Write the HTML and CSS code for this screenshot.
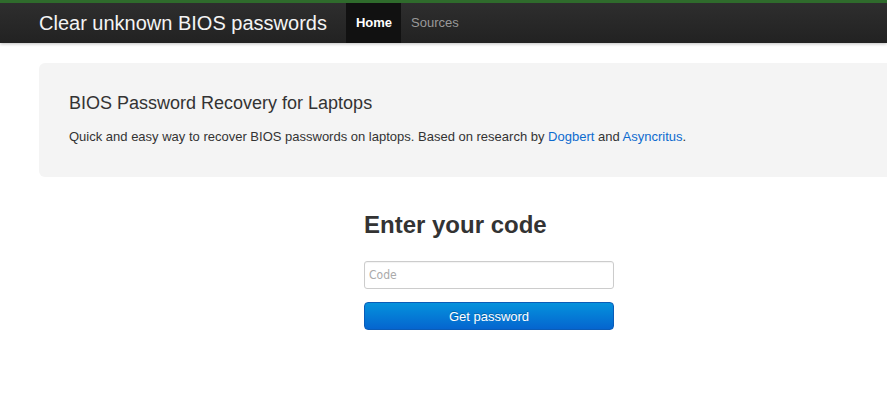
FILE: index.html
```html
<!DOCTYPE html>
<html>
	<head>
		<meta charset="UTF-8">
		<title>Clear unknown BIOS passwords</title>
		<link rel="stylesheet" href="styles.css">
	</head>
	<body>
		<div class="navbar">
			<div class="container nav_inner">
				<a class="brand" href="#">Clear unknown BIOS passwords</a>
				<ul class="nav">
					<li class="active"><a href="#">Home</a></li>
					<li><a href="#">Sources</a></li>
				</ul>
			</div>
		</div>
		<div class="container">
			<div class="hero">
				<h1>BIOS Password Recovery for Laptops</h1>
				<p>Quick and easy way to recover BIOS passwords on laptops. Based on research by <a href="#">Dogbert</a> and <a href="#">Asyncritus</a>.</p>
			</div>
			<div class="code_form">
				<h2>Enter your code</h2>
				<input type="text" placeholder="Code">
				<button>Get password</button>
			</div>
		</div>
	</body>
</html>
```
FILE: styles.css
```css
*{
	padding: 0px;
	margin: 0px;
	box-sizing: border-box;
}
html, body{
	overflow: hidden;
}
body{
	font-family: "Liberation Sans", Arial, sans-serif;
	font-size: 13px;
	line-height: 18px;
	color: #333;
	background: #fff;
}
a{
	text-decoration: none;
	color: #0d6bcf;
}
.navbar{
	border-top: 3px solid #2f6b2c;
	background: linear-gradient(#2e2e2e, #222);
	height: 43px;
	box-shadow: 0 1px 3px rgba(0,0,0,0.25);
}
.container{
	width: 940px;
	margin-left: 39px;
}
.nav_inner{
	display: flex;
	height: 40px;
}
.brand{
	color: #f4f4f4;
	font-size: 20px;
	line-height: 40px;
	margin-right: 19px;
}
.nav{
	list-style: none;
	display: flex;
}
.nav li a{
	display: block;
	padding: 0 10px;
	line-height: 40px;
	color: #999;
	font-size: 13px;
}
.nav li.active a{
	background: #111;
	color: #fff;
	font-weight: bold;
	padding: 0 9px 0 10px;
}
.hero{
	margin-top: 20px;
	background: #f4f4f4;
	border-radius: 6px;
	padding: 30px 30px 31px;
}
.hero h1{
	font-size: 18px;
	font-weight: normal;
	line-height: 20px;
	margin-bottom: 15px;
}
.code_form{
	width: 250px;
	margin: 33px 0 0 325px;
}
.code_form h2{
	font-size: 24px;
	line-height: 30px;
	font-weight: bold;
	margin-bottom: 21px;
}
.code_form input{
	display: block;
	width: 250px;
	height: 28px;
	border: 1px solid #ccc;
	border-radius: 3px;
	padding: 0 4px;
	font-family: "Liberation Sans Narrow", "DejaVu Sans Condensed", sans-serif;
	font-size: 12px;
	box-shadow: inset 0 1px 1px rgba(0,0,0,0.05);
}
.code_form input::placeholder{
	color: #aaa;
}
.code_form button{
	display: block;
	width: 250px;
	height: 28px;
	margin-top: 13px;
	border: 1px solid #0a5cb8;
	border-radius: 4px;
	background: linear-gradient(#0592dc, #0565cf);
	color: #fff;
	font-family: "Liberation Sans", Arial, sans-serif;
	font-size: 13px;
	text-shadow: 0 -1px 0 rgba(0,0,0,0.25);
	cursor: pointer;
}
```
